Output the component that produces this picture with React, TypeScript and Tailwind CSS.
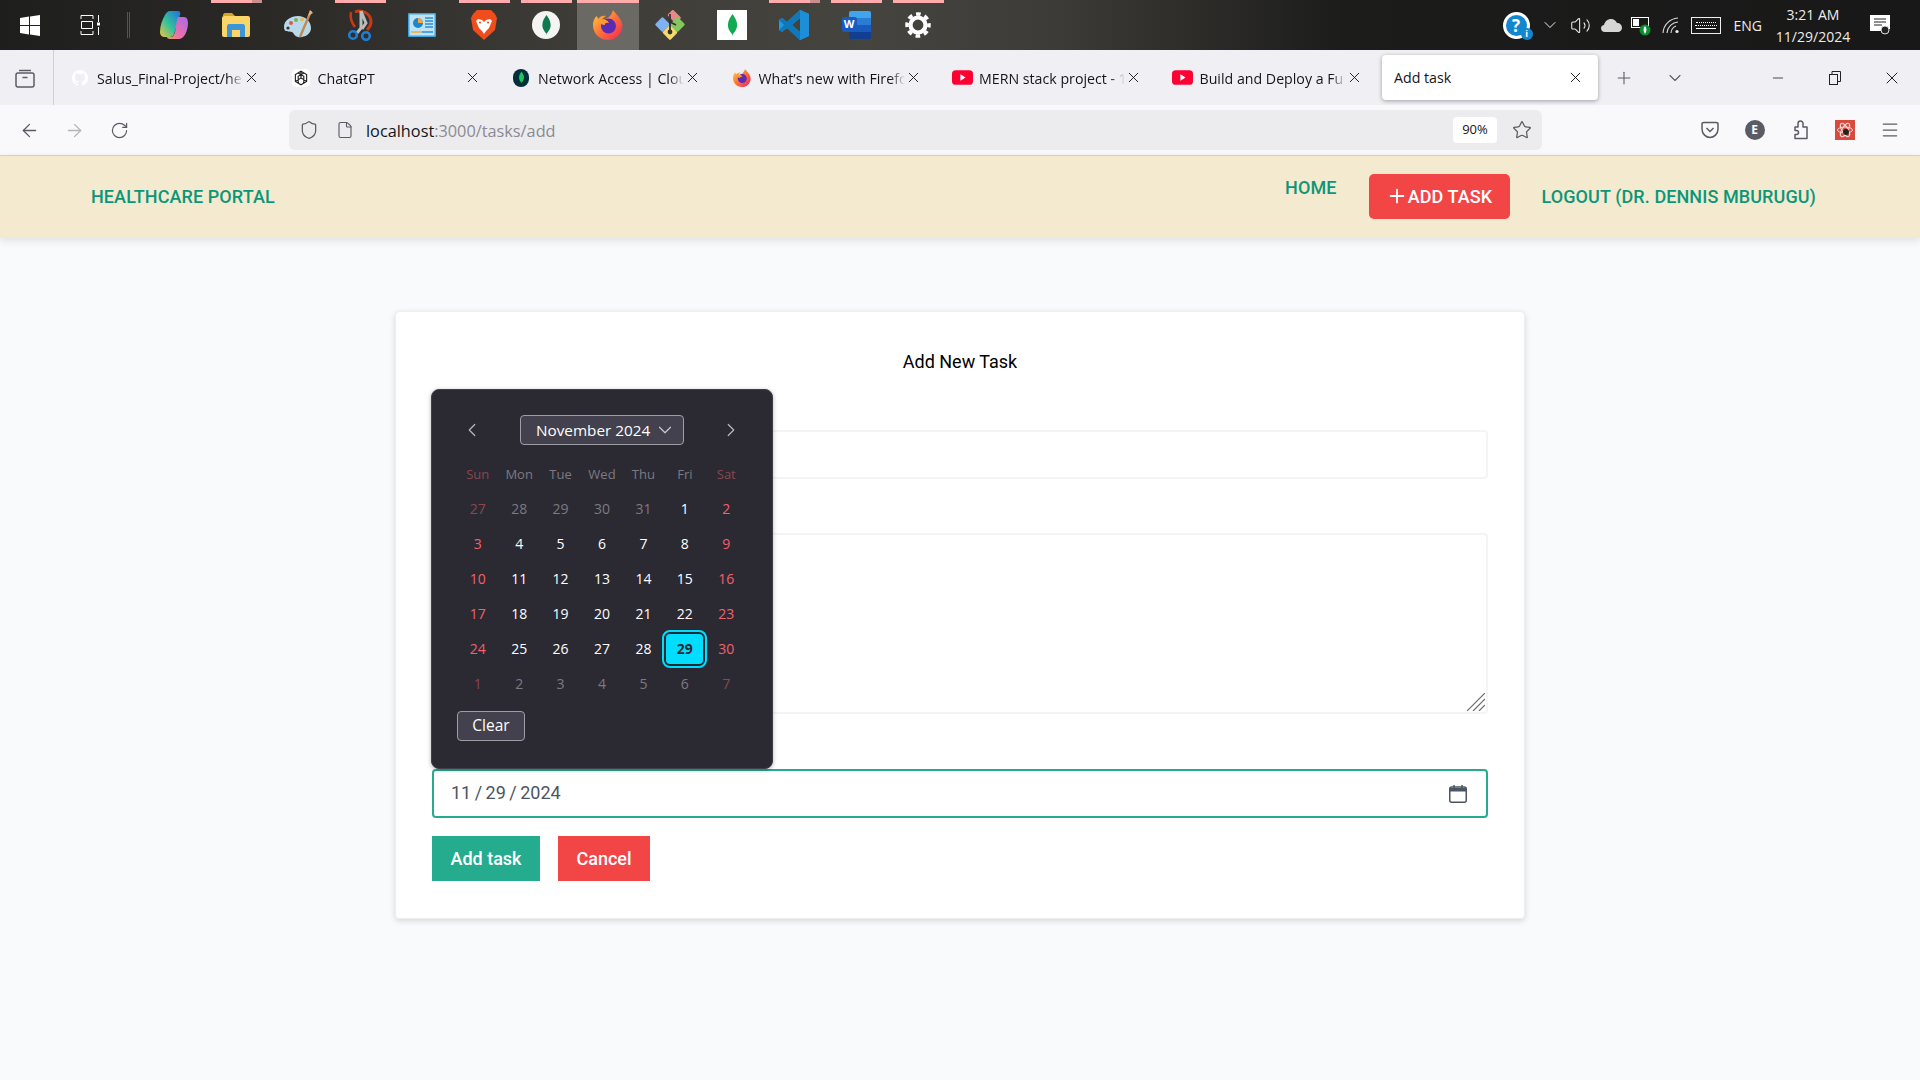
import React from "react";
import { ArrowLeft, ArrowRight, RotateCw, Shield, File, Star, Menu, Plus, ChevronDown, ChevronLeft, ChevronRight, X, Minus, Volume2 } from "lucide-react";

const UI = "font-['Open_Sans','Noto_Sans',sans-serif]";

const Leaf = ({ c = "#13aa52", w = 10, h = 24 }: { c?: string; w?: number; h?: number }) => (
  <svg width={w} height={h} viewBox="0 0 10 24"><path d="M5 0C7 3 10 7 10 12C10 17 7 20 5.4 22L5 24L4.6 22C3 20 0 17 0 12C0 7 3 3 5 0Z" fill={c} /></svg>
);

const WindowsLogo = () => (
  <svg width="20" height="21" viewBox="0 0 20 21" fill="#fff"><path d="M0 3L9 1.6V10H0ZM10 1.4L20 0V10H10ZM0 11H9V19.4L0 18ZM10 11H20V21L10 19.600Z" /></svg>
);
const TaskView = () => (
  <svg width="20" height="20" viewBox="0 0 20 20" fill="none" stroke="#fff" strokeWidth="1"><path d="M1 .5H13M1 .5V4M13 .5V4M1.500 6.500H12.500V13.500H1.500ZM1 19.500H13M1 16V19.500M13 16V19.500M18.500 0V7M18.500 12V20" /><rect x="17" y="7.500" width="3" height="3" fill="#fff" stroke="none" /></svg>
);
const Copilot = () => (
  <svg width="30" height="30" viewBox="0 0 30 30">
    <defs>
      <linearGradient id="cpa" x1="0" y1="1" x2="1" y2="0"><stop offset="0" stopColor="#f2c53d" /><stop offset=".45" stopColor="#35c29a" /><stop offset="1" stopColor="#1f6fe0" /></linearGradient>
      <linearGradient id="cpb" x1="1" y1="0" x2="0" y2="1"><stop offset="0" stopColor="#a66be8" /><stop offset=".6" stopColor="#e86fb0" /><stop offset="1" stopColor="#f59a5a" /></linearGradient>
    </defs>
    <path d="M11 1H19C21 1 22 3 21 5L15 24C14 27 12 27 9 27H6C3 27 1 25 1 22C1 16 3 10 6 5C7 3 9 1 11 1Z" fill="url(#cpa)" />
    <path d="M20 7H25C28 7 29 10 29 13C29 19 26 29 20 29H11C9 29 8 28 8 27H12C14 27 15 25 16 22L18 10C18 8 19 7 20 7Z" fill="url(#cpb)" />
  </svg>
);
const Folder = () => (
  <svg width="28" height="24" viewBox="0 0 28 24">
    <path d="M1 2C1 1 2 0 3 0H10L13 3H1Z" fill="#d9a520" />
    <rect x="0" y="3" width="28" height="21" rx="2" fill="#fbd568" />
    <path d="M5 24V13C5 12 6 11 7 11H21C22 11 23 12 23 13V24H18V17H10V24Z" fill="#3d94d6" />
  </svg>
);
const Palette = () => (
  <svg width="30" height="30" viewBox="0 0 30 30">
    <path d="M1 17C1 10 8 6 15 6C22 6 28 11 28 18C28 25 20 28 15 27C11 26 11 23 9 22C6 21 1 23 1 17Z" fill="#b9d9ea" />
    <circle cx="8" cy="13" r="2" fill="#d85c4b" /><circle cx="13" cy="10" r="2" fill="#72b45a" /><circle cx="5" cy="18" r="1.600" fill="#333" /><circle cx="19" cy="9.500" r="1.800" fill="#e9b640" />
    <path d="M28 1L17 27" stroke="#c08a52" strokeWidth="2.400" /><path d="M25 6L27 0L30 3Z" fill="#d7b58a" />
  </svg>
);
const Snip = () => (
  <svg width="26" height="32" viewBox="0 0 26 32" fill="none">
    <path d="M8 3C14 0 24 4 24 13C24 17 22 19 20 21" stroke="#c93a14" strokeWidth="3" />
    <path d="M4 3C3 8 4 13 8 18" stroke="#c93a14" strokeWidth="2.500" />
    <path d="M14 2V19L10 24M14 2L19 14L15 20" stroke="#b9bcc0" strokeWidth="3" />
    <circle cx="6" cy="26" r="3.800" stroke="#1d7fd6" strokeWidth="2.600" />
    <circle cx="19" cy="27" r="3.800" stroke="#1d7fd6" strokeWidth="2.600" />
  </svg>
);
const BluePanel = () => (
  <svg width="28" height="24" viewBox="0 0 28 24">
    <rect width="28" height="24" fill="#3aa3e0" rx="1" />
    <rect x="1.500" y="1.500" width="25" height="21" fill="#bfe3f5" />
    <circle cx="10" cy="10" r="5" fill="#1d86cf" /><path d="M10 5A5 5 0 0 1 15 10H10Z" fill="#f2a83c" />
    <path d="M17 5H25M17 8H25M17 11H25M17 14H25" stroke="#2a8ed2" strokeWidth="1.600" />
    <path d="M3 19H14" stroke="#f2a83c" strokeWidth="1.500" /><path d="M14 19H25" stroke="#2a8ed2" strokeWidth="1.500" />
  </svg>
);
const Brave = () => (
  <svg width="26" height="30" viewBox="0 0 26 30">
    <path d="M6 0H20L24 4L26 8L24 20L13 30L2 20L0 8L2 4Z" fill="#f04d1c" />
    <path d="M7 9L11 10L13 12L15 10L19 9L21 11L18 18L15 21L13 24L11 21L8 18L5 11Z" fill="#fff" />
    <circle cx="9" cy="12.500" r="1.100" fill="#f04d1c" /><circle cx="17" cy="12.500" r="1.100" fill="#f04d1c" />
  </svg>
);
const MongoRound = () => (
  <div className="flex h-[28px] w-[28px] items-center justify-center rounded-full bg-[#f4f4f2]"><Leaf c="#0f7a4f" w={9} h={20} /></div>
);
const Firefox = ({ s = 30 }: { s?: number }) => (
  <svg width={s} height={s} viewBox="0 0 30 30" className="shrink-0">
    <defs>
      <linearGradient id={`ffa${s}`} x1="0" y1="0" x2="1" y2="1"><stop offset="0" stopColor="#ffd43a" /><stop offset=".5" stopColor="#ff7139" /><stop offset="1" stopColor="#f0225c" /></linearGradient>
    </defs>
    <path d="M20 0C22 3 27 7 29 13C31 22 24 30 15 30C6 30 0 23 0 15C0 11 2 7 4 6L5 9C7 6 11 5 13 6C11 7 9 9 9 10C14 9 18 7 20 0Z" fill={`url(#ffa${s})`} />
    <circle cx="15.500" cy="16" r="7.500" fill="#5b2bb5" />
    <path d="M5 10C10 8 15 10 16 13C13 12 11 14 12 15C9 15 7 13 5 10Z" fill="#ff9a2e" />
  </svg>
);
const GitDiamond = () => (
  <svg width="30" height="30" viewBox="0 0 30 30">
    <rect x="13" y="-1" width="12" height="8" rx="1.500" transform="rotate(45 15 5)" fill="#e8878b" />
    <rect x="2" y="9" width="11" height="11" rx="1.500" transform="rotate(45 7.500 14.500)" fill="#7fb1f5" />
    <rect x="17" y="9" width="11" height="11" rx="1.500" transform="rotate(45 22.500 14.500)" fill="#85c65f" />
    <rect x="9.500" y="17" width="11" height="11" rx="1.500" transform="rotate(45 15 22.500)" fill="#f5d96b" />
    <path d="M15 4V22M15 12L21 15" stroke="#333" strokeWidth="1.800" /><circle cx="15" cy="22" r="2.400" fill="#333" />
  </svg>
);
const MongoSquare = () => (
  <div className="flex h-[30px] w-[30px] items-center justify-center bg-white"><Leaf w={11} h={22} /></div>
);
const VSCode = () => (
  <svg width="30" height="30" viewBox="0 0 30 30">
    <path d="M21 0L30 4V26L21 30L8 18L3 22L0 20V10L3 8L8 12ZM21 8L13 15L21 22Z" fill="#1f9ce3" />
    <path d="M21 0L30 4V26L21 30Z" fill="#1d8fd8" /><path d="M21 8L13 15L21 22V30L8 18L3 22L0 20L5 15L0 10L3 8L8 12L21 0Z" fill="#0f78ba" />
  </svg>
);
const Word = () => (
  <div className="relative h-[28px] w-[29px]">
    <div className="ml-[7px] flex h-full w-[22px] flex-col overflow-hidden rounded-[2px]">
      <div className="flex-1 bg-[#41a5ee]" /><div className="flex-1 bg-[#2b7cd3]" /><div className="flex-1 bg-[#185abd]" /><div className="flex-1 bg-[#103f91]" />
    </div>
    <div className="absolute left-0 top-[6px] flex h-[15px] w-[15px] items-center justify-center rounded-[2px] bg-[#185abd] font-['Open_Sans'] text-[11px] font-bold text-white">W</div>
  </div>
);
const Gear = () => (
  <svg width="26" height="26" viewBox="0 0 26 26" fill="none" stroke="#fff">
    <circle cx="13" cy="13" r="7.500" strokeWidth="4.200" />
    <circle cx="13" cy="13" r="11" strokeWidth="3.500" strokeDasharray="4.640 4" strokeDashoffset="2.300" />
  </svg>
);

const apps: { el: React.ReactNode; bar?: boolean; split?: boolean; active?: boolean }[] = [
  { el: <Copilot /> },
  { el: <Folder />, bar: true, split: true },
  { el: <Palette /> },
  { el: <Snip />, bar: true },
  { el: <BluePanel /> },
  { el: <Brave />, bar: true },
  { el: <MongoRound />, bar: true },
  { el: <Firefox />, active: true },
  { el: <GitDiamond /> },
  { el: <MongoSquare /> },
  { el: <VSCode />, bar: true, split: true },
  { el: <Word />, bar: true },
  { el: <Gear />, bar: true },
];

function Taskbar() {
  return (
    <div className={`flex h-[50px] items-stretch bg-[linear-gradient(90deg,#1e1e1d_0%,#2b2a27_15%,#3d3c37_30%,#45443f_45%,#3c3b37_55%,#1c1c1b_70%,#181818_100%)] ${UI}`}>
      <div className="flex w-[60px] items-center justify-center"><WindowsLogo /></div>
      <div className="flex w-[60px] items-center justify-center"><TaskView /></div>
      <div className="flex w-[23px] items-center justify-center pr-[7px]"><div className="h-[26px] w-[3px] border-x border-[#55544f]" /></div>
      {apps.map((a, i) => (
        <div key={i} className={`relative flex w-[62px] items-center justify-center ${a.active ? "bg-[#6a6964]" : ""}`}>
          {a.bar && (
            <div className="absolute left-[6px] right-[5px] top-0 flex h-[3px]">
              <div className="flex-1 bg-[#ffabab]" />
              {a.split && <div className="w-[10px] bg-[#c98f8f]" />}
            </div>
          )}
          {a.active && <div className="absolute inset-x-0 top-0 h-[3px] bg-[#ffabab]" />}
          {a.el}
        </div>
      ))}
      <div className="ml-auto flex items-center pr-[30px] text-[#ececec]">
        <div className="relative mr-[10px] flex h-[27px] w-[27px] items-center justify-center rounded-full border-[3px] border-white bg-[#1287cf] text-[17px] font-bold leading-none text-white">
          ?
          <div className="absolute bottom-[-4px] right-[-6px] flex h-[12px] w-[12px] items-center justify-center rounded-full bg-[#1287cf] text-[9px] leading-none">i</div>
        </div>
        <ChevronDown size={20} strokeWidth={1.200} className="mr-[10px]" />
        <Volume2 size={21} strokeWidth={1.200} className="mr-[10px]" />
        <svg width="21" height="14" viewBox="0 0 21 14" className="mr-[9px]"><path d="M4 14C1 14 0 12 0 10C0 8 2 7 3 7C4 3 7 1 10 1C13 1 15 3 16 5C19 5 21 7 21 10C21 12 19 14 17 14Z" fill="#d6d6d6" /></svg>
        <svg width="20" height="22" viewBox="0 0 20 22" className="mr-[11px]">
          <rect x=".5" y="3.500" width="17" height="10" fill="none" stroke="#fff" /><rect x="2" y="5" width="6" height="7" fill="#fff" />
          <circle cx="14" cy="16" r="5.500" fill="#0a8f2e" /><path d="M14 12C16 14 16 17 14 20C12 17 12 14 14 12Z" fill="#fff" />
        </svg>
        <svg width="18" height="18" viewBox="0 0 18 18" fill="none" stroke="#d8d8d8" className="mr-[11px]">
          <path d="M1 17A16 16 0 0 1 16 2M5 17A12 12 0 0 1 16 6M9 17A8 8 0 0 1 14 10" strokeWidth="1.100" /><circle cx="15" cy="15.500" r="1.600" fill="#eee" stroke="none" />
        </svg>
        <div className="mr-[13px] flex h-[17px] w-[30px] flex-col items-center justify-center gap-[2px] border border-[#eee]">
          <div className="w-[20px] border-t border-dotted border-white" />
          <div className="w-[22px] border-t border-dotted border-white" />
          <div className="w-[20px] border-t border-white" />
        </div>
        <div className="mr-[13px] text-[14px]">ENG</div>
        <div className="mr-[19px] flex w-[76px] flex-col items-center gap-[3px] text-[14px] leading-[19px]"><span>3:21 AM</span><span>11/29/2024</span></div>
        <svg width="20" height="20" viewBox="0 0 20 20">
          <path d="M0 0H20V14H17V16H0Z" fill="#fff" /><path d="M4 4H16M4 7H16M4 10H12" stroke="#222" strokeWidth="1" />
          <circle cx="15" cy="15" r="4" fill="#222" stroke="#ddd" />
        </svg>
      </div>
    </div>
  );
}

const Github = () => (
  <svg width="16" height="16" viewBox="0 0 16 16" fill="#fff"><path d="M8 0C3.580 0 0 3.580 0 8c0 3.540 2.290 6.530 5.470 7.590.4.070.55-.17.55-.38v-1.340c-2.230.48-2.690-1.070-2.690-1.070-.36-.92-.89-1.170-.89-1.170-.73-.5.05-.49.05-.49.8.060 1.230.83 1.230.83.71 1.220 1.870.87 2.330.66.070-.52.28-.87.51-1.070-1.780-.2-3.640-.89-3.640-3.950 0-.87.31-1.590.82-2.150-.08-.2-.36-1.020.08-2.120 0 0 .67-.21 2.200.82a7.600 7.600 0 0 1 4 0c1.530-1.040 2.200-.82 2.200-.82.44 1.100.16 1.920.08 2.120.51.56.82 1.270.82 2.150 0 3.070-1.870 3.750-3.650 3.950.29.25.54.73.54 1.480v2.200c0 .21.15.46.55.38A8 8 0 0 0 16 8c0-4.420-3.580-8-8-8z" /></svg>
);
const GptIcon = () => (
  <svg width="18" height="18" viewBox="0 0 16 16" fill="none" stroke="#222" strokeWidth="1" className="shrink-0"><rect width="16" height="16" rx="4" fill="#fff" stroke="none" /><path d="M8 2L13 5V11L8 14L3 11V5ZM8 2V8L13 11M8 8L3 11M5.500 3.500L10.500 6.500V12.500M10.500 3.500L5.500 6.500V12.500" /></svg>
);
const AtlasIcon = () => (
  <div className="flex h-[18px] w-[16px] shrink-0 items-center justify-center rounded-full bg-[#02303a]"><Leaf c="#19c95f" w={5} h={13} /></div>
);
const YouTube = () => (
  <svg width="21" height="15" viewBox="0 0 20 14" className="shrink-0"><rect width="20" height="14" rx="3.500" fill="#ff0033" /><path d="M8 4L13 7L8 10Z" fill="#fff" /></svg>
);

const tabs: { icon: React.ReactNode; title: string }[] = [
  { icon: <Github />, title: "Salus_Final-Project/he" },
  { icon: <GptIcon />, title: "ChatGPT" },
  { icon: <AtlasIcon />, title: "Network Access | Clou" },
  { icon: <Firefox s={18} />, title: "What’s new with Firefo" },
  { icon: <YouTube />, title: "MERN stack project - 1" },
  { icon: <YouTube />, title: "Build and Deploy a Fu" },
];

function TabBar() {
  return (
    <div className={`flex h-[55px] items-center bg-[#f0f0f4] text-[14.2px] text-[#15141a] ${UI}`}>
      <div className="flex h-full w-[54px] items-center justify-center border-r border-[#cfcfd8] pr-[4px]">
        <svg width="20" height="20" viewBox="0 0 20 20" fill="none" stroke="#5b5b66" strokeWidth="1.500"><rect x="1" y="5" width="18" height="14" rx="2" /><path d="M4 2.500H16M7.500 9.500H12.500" /></svg>
      </div>
      <div className="ml-[4px] flex items-center">
        {tabs.map((t, i) => (
          <div key={i} className="flex h-[45px] w-[220.5px] items-center pl-[14px]">
            <div className="flex w-[16px] items-center justify-center">{t.icon}</div>
            <div className="ml-[9px] w-[146px] overflow-hidden whitespace-nowrap pt-[2px] leading-[20px] [mask-image:linear-gradient(to_right,black_90%,transparent)]">{t.title}</div>
            <X size={17} strokeWidth={1.300} className="shrink-0" />
          </div>
        ))}
        <div className="ml-[1px] flex h-[45px] w-[216px] items-center justify-between rounded-[4px] bg-white pl-[12px] pr-[14px] shadow-[0_1px_4px_rgba(0,0,0,.35)]">
          <span className="pt-px">Add task</span>
          <X size={17} strokeWidth={1.300} />
        </div>
      </div>
      <Plus size={20} strokeWidth={1.300} className="ml-[16px] text-[#5b5b66]" />
      <ChevronDown size={20} strokeWidth={1.300} className="ml-[31px] text-[#5b5b66]" />
      <div className="ml-auto flex items-center text-[#222]">
        <div className="flex w-[57px] justify-center"><Minus size={16} strokeWidth={1.200} /></div>
        <div className="flex w-[57px] justify-center">
          <svg width="14" height="14" viewBox="0 0 14 14" fill="none" stroke="#222"><rect x="1.500" y="3.500" width="8" height="10" /><path d="M4 3.500V.5H12.500V10.500H9.500" /></svg>
        </div>
        <div className="flex w-[57px] justify-center"><X size={20} strokeWidth={1.200} /></div>
      </div>
    </div>
  );
}

function Toolbar() {
  const slot = "flex w-[45px] items-center justify-center";
  return (
    <div className={`flex h-[50px] items-center bg-[#f9f9fb] pl-[7px] pr-[8px] text-[#5b5b66] ${UI}`}>
      <div className={slot}><ArrowLeft size={21} strokeWidth={1.500} /></div>
      <div className={`${slot} text-[#b5b5bb]`}><ArrowRight size={21} strokeWidth={1.500} /></div>
      <div className={slot}><RotateCw size={19} strokeWidth={1.500} /></div>
      <div className="ml-[147px] flex h-[40px] w-[1253px] items-center rounded-[6px] bg-[#ececee] pl-[10px] pr-[10px]">
        <Shield size={20} strokeWidth={1.500} />
        <File size={18} strokeWidth={1.500} className="ml-[17px]" />
        <div className="ml-[12px] pt-[3px] text-[16.3px] text-[#8a8a92]"><span className="text-[#15141a]">localhost</span>:3000/tasks/add</div>
        <div className="ml-auto flex h-[26px] w-[44px] items-center justify-center rounded-[4px] bg-white text-[13px] text-[#15141a]">90%</div>
        <Star size={20} strokeWidth={1.500} className="ml-[15px]" />
      </div>
      <div className="ml-auto flex">
        <div className={slot}>
          <svg width="18" height="18" viewBox="0 0 18 18" fill="none" stroke="#5b5b66" strokeWidth="1.500"><path d="M1 3C1 2 2 1.500 3 1.500H15C16 1.500 17 2 17 3V8C17 13 13 16.500 9 16.500C5 16.500 1 13 1 8Z" /><path d="M5.500 7L9 10.500L12.500 7" /></svg>
        </div>
        <div className={slot}><div className="flex h-[20px] w-[20px] items-center justify-center rounded-full bg-[#5b5b66] text-[12px] font-bold text-white">E</div></div>
        <div className={slot}>
          <svg width="20" height="20" viewBox="0 0 20 20" fill="none" stroke="#5b5b66" strokeWidth="1.500" strokeLinejoin="round"><path d="M5 18.500H17V7H13V3.500A2.500 2.500 0 0 0 8 3.500V7H5V10.500H6.500A2 2 0 0 1 6.500 14.500H5Z" /></svg>
        </div>
        <div className={slot}>
          <svg width="20" height="20" viewBox="0 0 20 20"><rect width="20" height="20" fill="#d94a3d" /><g fill="none" stroke="#f4d9d5" strokeWidth="1"><ellipse cx="10" cy="10" rx="7.500" ry="3" /><ellipse cx="10" cy="10" rx="7.500" ry="3" transform="rotate(60 10 10)" /><ellipse cx="10" cy="10" rx="7.500" ry="3" transform="rotate(120 10 10)" /></g><circle cx="11" cy="12" r="3" fill="#222" /></svg>
        </div>
        <div className={slot}><Menu size={20} strokeWidth={1.500} /></div>
      </div>
    </div>
  );
}

function Navbar() {
  return (
    <nav className="flex h-[83px] items-center justify-between border-t border-[#d6cfbc] bg-[#f3ead0] pb-[2px] pl-[91px] pr-[104px] text-[18px] font-medium tracking-[0.09px] text-[#0c9679] shadow-[0_3px_8px_rgba(0,0,0,.1)]">
      <div>HEALTHCARE PORTAL</div>
      <div className="flex items-start">
        <div className="leading-[28px]">HOME</div>
        <div className="ml-[32px] flex h-[45px] w-[141px] items-center justify-center rounded-[5px] bg-[#f24545] text-white">
          <Plus size={22} strokeWidth={2} />ADD TASK
        </div>
        <div className="ml-[32px] leading-[45px]">LOGOUT (DR. DENNIS MBURUGU)</div>
      </div>
    </nav>
  );
}

const cur: number[] = Array.from({ length: 30 }, (_, i) => i + 1);
const days: { d: number; other?: boolean }[] = [
  ...[27, 28, 29, 30, 31].map((d) => ({ d, other: true })),
  ...cur.map((d) => ({ d })),
  ...[1, 2, 3, 4, 5, 6, 7].map((d) => ({ d, other: true })),
];

function Calendar() {
  return (
    <div className={`absolute left-[35px] top-[77px] h-[380px] w-[342px] rounded-[8px] border border-[#3f3e49] bg-[#2b2a33] pt-[25px] text-[14px] text-white shadow-[0_1px_4px_rgba(0,0,0,.3)] ${UI}`}>
      <div className="relative flex h-[30px] justify-center">
        <ChevronLeft size={22} strokeWidth={1.300} className="absolute left-[29px] top-[4px] text-[#b9b8be]" />
        <div className="flex h-[30px] w-[164px] items-center rounded-[4px] border border-[#9e9ea5] bg-[#42414d] pl-[15px] text-[15.3px]">
          November 2024
          <ChevronDown size={22} strokeWidth={1.300} className="ml-[4px] text-[#c9c8cd]" />
        </div>
        <ChevronRight size={22} strokeWidth={1.300} className="absolute left-[288px] top-[4px] text-[#b9b8be]" />
      </div>
      <div className="ml-[25px] mt-[11px] grid w-[290px] grid-cols-7 auto-rows-[35px] text-center">
        {["Sun", "Mon", "Tue", "Wed", "Thu", "Fri", "Sat"].map((w, i) => (
          <div key={w} className={`flex items-center justify-center pt-[2px] text-[13px] ${i === 0 || i === 6 ? "text-[#8a474f]" : "text-[#7b7a81]"}`}>{w}</div>
        ))}
        {days.map((x, i) => {
          const weekend = i % 7 === 0 || i % 7 === 6;
          const sel = !x.other && x.d === 29;
          const color = x.other ? (weekend ? "text-[#8a474f]" : "text-[#7b7a81]") : weekend ? "text-[#f4606a]" : "text-white";
          return (
            <div key={i} className={`flex items-center justify-center ${color}`}>
              {sel ? (
                <div className="flex h-[38px] w-[45px] shrink-0 items-center justify-center rounded-[8px] border-2 border-[#00ddff] p-[2px]">
                  <div className="flex h-full w-full items-center justify-center rounded-[4px] bg-[#00ddff] font-bold text-[#2b2a33]">29</div>
                </div>
              ) : x.d}
            </div>
          );
        })}
      </div>
      <div className="ml-[25px] mt-[10px] flex h-[30px] w-[68px] items-center justify-center rounded-[4px] border border-[#9e9ea5] bg-[#42414d] text-[15.5px]">Clear</div>
    </div>
  );
}

function Card() {
  return (
    <div className="relative mx-auto mt-[73px] h-[608px] w-[1130px] rounded-[4px] border border-[#eceef0] bg-white px-[36px] pt-[36px] font-['Roboto',sans-serif] shadow-[0_2px_6px_rgba(0,0,0,.14)]">
      <div className="text-center text-[18px] leading-[28px] text-black">Add New Task</div>
      <div className="mt-[54px] h-[49px] rounded-[4px] border-2 border-[#f3f4f6] bg-white" />
      <div className="relative mt-[54px] h-[181px] rounded-[4px] border-2 border-[#f3f4f6] bg-white">
        <svg width="18" height="18" viewBox="0 0 18 18" stroke="#6b6b6b" strokeWidth="1.200" className="absolute bottom-[1px] right-[1px]">
          <path d="M0 18L18 0M6 18L18 6M12 18L18 12" />
        </svg>
      </div>
      <div className="mt-[55px] flex h-[49px] items-center justify-between rounded-[4px] border-2 border-[#26ab8e] bg-white pl-[17px] pr-[19px] text-[18px] text-[#4b5563]">
        <span className="pb-[2px] [word-spacing:-1px]">11 / 29 / 2024</span>
        <svg width="18" height="18" viewBox="0 0 18 18" fill="none"><rect x=".75" y="2" width="16.500" height="15.250" rx="2" stroke="#4b5563" strokeWidth="1.500" /><path d="M1 3H17V6.500H1Z" fill="#4b5563" /><path d="M5 0V3M13 0V3" stroke="#4b5563" strokeWidth="1.500" /></svg>
      </div>
      <div className="mt-[18px] flex gap-[18px] text-[18px] font-medium text-white">
        <div className="flex h-[45px] w-[108px] items-center justify-center bg-[#25ac8f]">Add task</div>
        <div className="flex h-[45px] w-[92px] items-center justify-center bg-[#f24545]">Cancel</div>
      </div>
      <Calendar />
    </div>
  );
}

export default function App() {
  return (
    <div className="h-[1080px] w-[1920px] overflow-hidden bg-[#f9fafb]">
      <Taskbar />
      <TabBar />
      <Toolbar />
      <div className="font-['Roboto',sans-serif]"><Navbar /></div>
      <Card />
    </div>
  );
}
